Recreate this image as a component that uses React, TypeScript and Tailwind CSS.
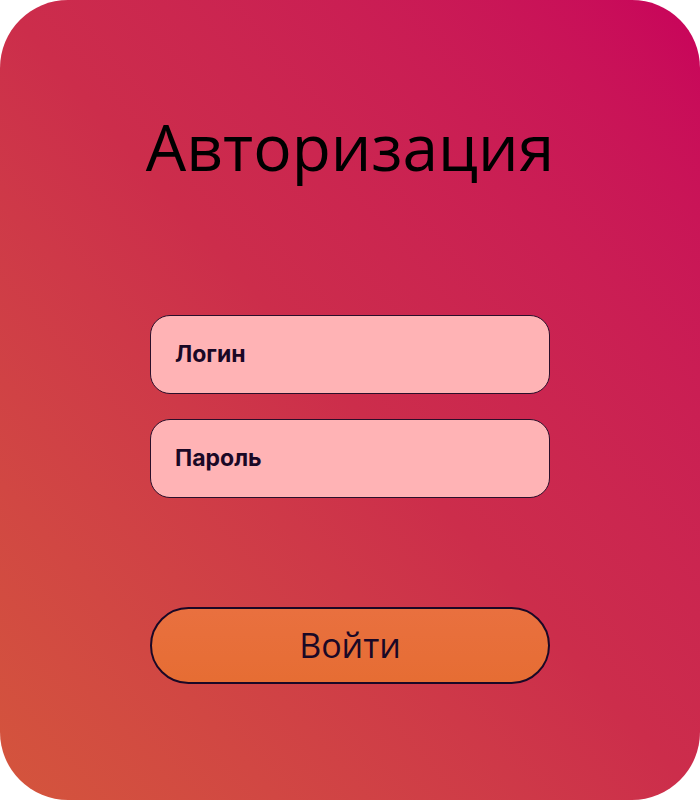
export default function App() {
  return (
    <div className="w-[700px] h-[800px] bg-white">
      <div className="flex flex-col items-center w-full h-full rounded-[68px] bg-gradient-to-tr from-[#d4553c] via-[#cc2d4b] to-[#c8025b] font-['Open_Sans',sans-serif]">
        <h1 className="mt-[103px] text-[64px] leading-[88px] text-black">Авторизация</h1>

        <div className="flex flex-col gap-[25px] mt-[124px]">
          <div className="flex items-center w-[400px] h-[79px] px-6 rounded-[20px] border border-[#2a0f2a] bg-[#ffb3b5]">
            <span className="font-['Inter',sans-serif] font-bold text-[23px] text-[#1a0826]">Логин</span>
          </div>
          <div className="flex items-center w-[400px] h-[79px] px-6 rounded-[20px] border border-[#2a0f2a] bg-[#ffb3b5]">
            <span className="font-['Inter',sans-serif] font-bold text-[23px] text-[#1a0826]">Пароль</span>
          </div>
        </div>

        <button className="flex items-center justify-center w-[400px] h-[77px] mt-[109px] rounded-full border-[2.5px] border-[#1a0826] bg-gradient-to-b from-[#e9703f] to-[#e66d33] text-[34px] text-[#1a0826]">
          Войти
        </button>
      </div>
    </div>
  )
}
